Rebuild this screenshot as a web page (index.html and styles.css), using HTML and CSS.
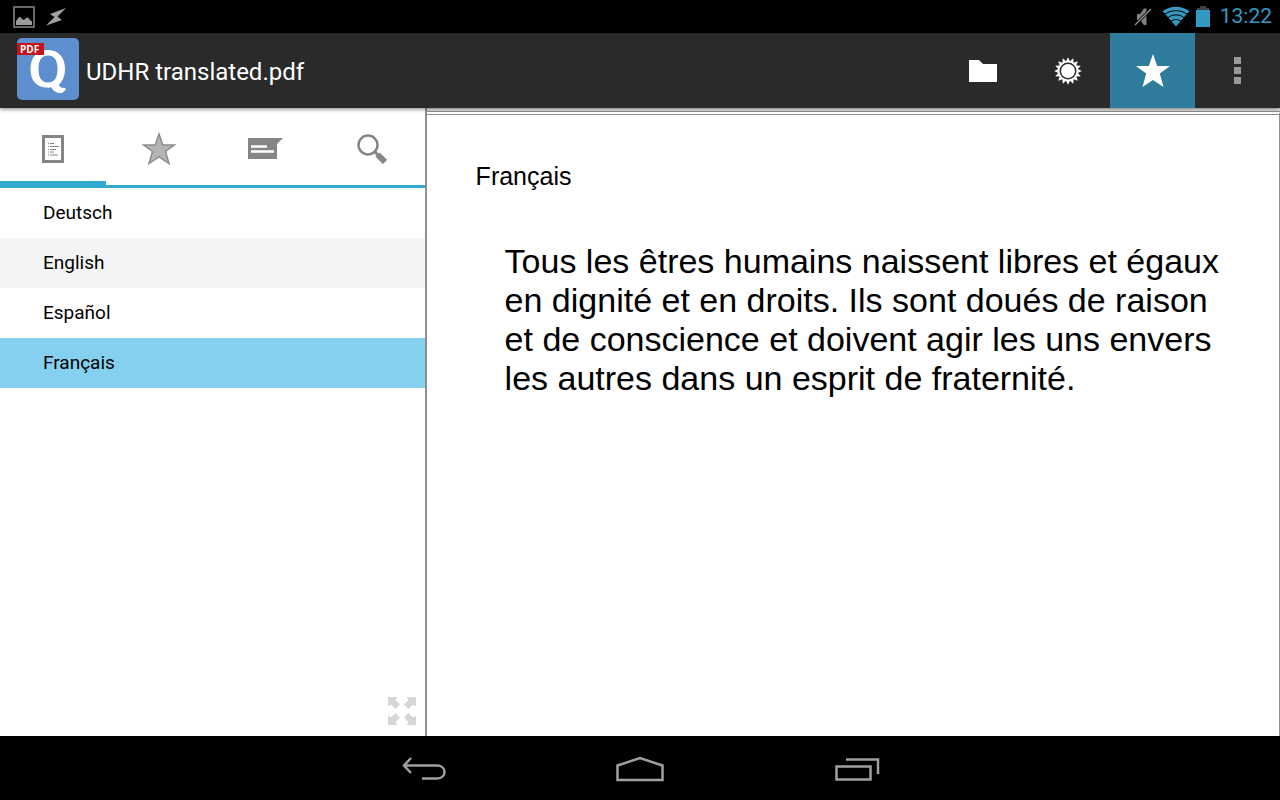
FILE: index.html
```html
<!DOCTYPE html>
<html lang="en">
  <head>
    <meta charset="UTF-8" />
    <meta name="viewport" content="width=device-width, initial-scale=1.0" />
    <title>UDHR translated.pdf</title>
    <link rel="stylesheet" href="styles.css">
  </head>
  <body>
    <div class="status-bar">
      <div class="status-icons">
        <svg width="22" height="22" viewBox="0 0 22 22">
          <rect x="1" y="1" width="20" height="20" fill="none" stroke="#8a8a8a" stroke-width="1.5" />
          <path d="M3 19V15L5 12.500L7 10.500L9 13L11 14L13 12L15 11.500L17 14L19 15.500V19Z" fill="#9c9c9c" />
        </svg>
        <svg width="22" height="20" viewBox="0 0 22 20">
          <path d="M21 1L5 7L9.500 10L1 18.500L17 13L12.500 9.500Z" fill="#a0a0a0" />
        </svg>
      </div>
      <div class="status-icons">
        <svg width="18" height="20" viewBox="0 0 18 20">
          <path d="M3 7H6L10 1.500H12.500V18H10L6 13H3Z" fill="#808080" />
          <path d="M1 18L17 2" stroke="#000" stroke-width="3" />
          <path d="M1 18L17 2" stroke="#8a8a8a" stroke-width="1.500" />
        </svg>
        <svg class="wifi" width="28" height="21" viewBox="0 0 28 21">
          <path d="M14 20.500L0.500 5Q14 -3.500 27.500 5Z" fill="#3399c2" />
          <path d="M2 8.500Q14 0.500 26 8.500M5 12Q14 5.500 23 12M8.500 15.500Q14 11.500 19.500 15.500" fill="none" stroke="#000" stroke-width="1" />
        </svg>
        <svg width="14" height="22" viewBox="0 0 14 22">
          <path d="M4 0H10V2H13V5H1V2H4Z" fill="#3c4144" />
          <rect x="0" y="4" width="14" height="17" fill="#3399c2" />
        </svg>
        <span class="clock">13:22</span>
      </div>
    </div>

    <header class="action-bar">
      <svg class="logo" width="62" height="62" viewBox="0 0 62 62">
        <rect width="62" height="62" rx="5" fill="#5d8fcf" />
        <path fill="#fff" fill-rule="evenodd" d="M31 12C43 12 48 21 48 31C48 38 45.500 43.500 42 46.500C42.500 49 44 50 48.500 50V52L45 55C39 55 36 53 34.500 49.500C19 51 13.500 42 13.500 31C13.500 20 19 12 31 12ZM31 17.500C24 17.500 21.500 23 21.500 31C21.500 39 24 44.500 31 44.500C38 44.500 40.500 39 40.500 31C40.500 23 38 17.500 31 17.500Z" />
        <rect y="5" width="27" height="12" fill="#c6121b" />
        <text class="logo-tag" x="3" y="15">PDF</text>
      </svg>
      <h1>UDHR translated.pdf</h1>
      <button class="action" aria-label="Open">
        <svg width="28" height="22" viewBox="0 0 28 22">
          <path d="M0 0H10L14 4H28V22H0Z" fill="#fff" />
        </svg>
      </button>
      <button class="action" aria-label="Settings">
        <svg width="28" height="28" viewBox="-14 -14 28 28">
          <path id="gear" fill="#fff" />
          <circle r="8.500" fill="#2a2a2a" />
          <circle r="7" fill="#fff" />
        </svg>
      </button>
      <button class="action active" aria-label="Bookmarks">
        <svg width="36" height="36" viewBox="0 0 36 36">
          <path d="M18 1L22.200 13H35L24.800 20.500L28.500 34L18 27L7.500 34L11.200 20.500L1 13H13.800Z" fill="#fff" />
        </svg>
      </button>
      <button class="action" aria-label="More">
        <svg width="7" height="27" viewBox="0 0 7 27">
          <path d="M0 0H7V7H0ZM0 10H7V17H0ZM0 20H7V27H0Z" fill="#9a9a9a" />
        </svg>
      </button>
    </header>

    <main>
      <aside>
        <nav class="tabs">
          <button class="tab selected" aria-label="Outline">
            <svg width="22" height="28" viewBox="0 0 22 28">
              <rect x="1.500" y="1.500" width="19" height="25" fill="#fff" stroke="#858585" stroke-width="3" />
              <path d="M6 8.500H7M8 8.500H12M6 11.500H7M8 11.500H17M6 14.500H7M8 14.500H14M6 17H7M8 17H12M6 20H7M8 20H16" stroke="#858585" />
            </svg>
          </button>
          <button class="tab" aria-label="Bookmarks">
            <svg width="34" height="34" viewBox="0 0 34 34">
              <path d="M17 2L20.800 13H32.500L23.500 19.500L27 31.500L17 24.800L7 31.500L10.500 19.500L1.500 13H13.200Z" fill="#b5b5b5" stroke="#8c8c8c" stroke-width="1.500" />
            </svg>
          </button>
          <button class="tab" aria-label="Annotations">
            <svg width="35" height="21" viewBox="0 0 35 21">
              <path d="M0 0H35L29 6V21H0Z" fill="#858585" />
              <path d="M3 8.500H19M3 13.500H26" stroke="#fff" stroke-width="2.500" />
            </svg>
          </button>
          <button class="tab" aria-label="Search">
            <svg width="30" height="30" viewBox="0 0 30 30">
              <circle cx="11" cy="11" r="9.500" fill="none" stroke="#858585" stroke-width="2.500" />
              <path d="M17.500 17.500L22 22" stroke="#858585" stroke-width="3" />
              <path d="M20.500 20.500L28 28" stroke="#858585" stroke-width="6" />
            </svg>
          </button>
        </nav>
        <ul class="outline">
          <li><a href="#deutsch">Deutsch</a></li>
          <li><a href="#english">English</a></li>
          <li><a href="#espanol">Español</a></li>
          <li><a class="current" href="#francais">Français</a></li>
        </ul>
        <button class="expand" aria-label="Full screen">
          <svg width="30" height="30" viewBox="0 0 30 30">
            <path d="M1 1H10.500L8.500 4L13 8.500L8.500 13L4 8.500L1 10.500ZM29 1H19.500L21.500 4L17 8.500L21.500 13L26 8.500L29 10.500ZM1 29H10.500L8.500 26L13 21.500L8.500 17L4 21.500L1 19.500ZM29 29H19.500L21.500 26L17 21.500L21.500 17L26 21.500L29 19.500Z" fill="#d6d6d6" />
          </svg>
        </button>
      </aside>

      <section class="viewer">
        <article class="page" id="francais" lang="fr">
          <h2>Français</h2>
          <p>
            Tous les êtres humains naissent libres et égaux<br>
            en dignité et en droits. Ils sont doués de raison<br>
            et de conscience et doivent agir les uns envers<br>
            les autres dans un esprit de fraternité.
          </p>
        </article>
      </section>
    </main>

    <footer class="nav-bar">
      <button aria-label="Back">
        <svg width="44" height="24" viewBox="0 0 44 24">
          <path d="M9 1L2 8.500L9 16M2 8.500H35C45 8.500 45 21.500 35 21.500H20" fill="none" stroke="#a0a0a0" stroke-width="2.500" />
        </svg>
      </button>
      <button aria-label="Home">
        <svg width="48" height="26" viewBox="0 0 48 26">
          <path d="M1.500 24V9.500L24 2L46.500 9.500V24Z" fill="none" stroke="#a0a0a0" stroke-width="2.500" />
        </svg>
      </button>
      <button aria-label="Recent apps">
        <svg width="46" height="24" viewBox="0 0 46 24">
          <path d="M2.500 9.500H36.500V22.500H2.500ZM12 2.500H44V17" fill="none" stroke="#a0a0a0" stroke-width="2.500" />
        </svg>
      </button>
    </footer>

    <script>
      // 16 teeth around the settings disc
      let points = [];
      for (let i = 0; i < 32; i++) {
        let r = i % 2 ? 10 : 13.8;
        let a = (i * Math.PI) / 16;
        points.push(`${(r * Math.sin(a)).toFixed(2)} ${(-r * Math.cos(a)).toFixed(2)}`);
      }
      document.getElementById("gear").setAttribute("d", `M${points.join("L")}Z`);
    </script>
  </body>
</html>
```
FILE: styles.css
```css
:root {
  --holo: #33a8d0;
  --bar: #2a2a2a;
  --grey: #8f8f8f;
}

* {
  box-sizing: border-box;
}

body {
  margin: 0;
  min-height: 100vh;
  display: flex;
  flex-direction: column;
  background: #fff;
  font-family: Roboto, sans-serif;
  color: #000;
}

button {
  display: flex;
  align-items: center;
  justify-content: center;
  padding: 0;
  border: none;
  background: none;
  cursor: pointer;
}

svg {
  display: block;
}

.status-bar {
  display: flex;
  justify-content: space-between;
  height: 33px;
  padding: 0 8px 0 13px;
  background: #000;
}

.status-icons {
  display: flex;
  align-items: center;
  gap: 10px;
}

.wifi {
  margin-right: -4px;
}

.clock {
  color: #3399c2;
  font-size: 21px;
  line-height: 35px;
}

.action-bar {
  position: relative;
  display: flex;
  align-items: center;
  height: 75px;
  padding-left: 17px;
  background: var(--bar);
  box-shadow: 0 1px 4px rgba(0, 0, 0, 0.5);
}

.action-bar h1 {
  flex: 1;
  margin: 0 0 0 7px;
  padding-top: 2px;
  color: #fff;
  font-size: 24px;
  font-weight: 400;
}

.logo {
  margin-bottom: 4px;
}

.logo-tag {
  fill: #fff;
  font-family: "Open Sans", sans-serif;
  font-size: 10px;
  font-weight: 700;
}

.action {
  width: 85px;
  align-self: stretch;
}

.action.active {
  background: #307c9c;
}

main {
  flex: 1;
  display: flex;
}

aside {
  width: 33.33%;
  display: flex;
  flex-direction: column;
  border-right: 2px solid var(--grey);
}

.tabs {
  display: flex;
  height: 80px;
  border-bottom: 3px solid var(--holo);
}

.tab {
  flex: 1;
  padding-top: 4px;
}

.tab.selected {
  border-bottom: 4px solid var(--holo);
  padding-top: 8px;
}

.outline {
  flex: 1;
  margin: 0;
  padding: 0;
  list-style: none;
}

.outline a {
  display: block;
  padding-left: 43px;
  color: #000;
  font-size: 19px;
  line-height: 50px;
  text-decoration: none;
}

.outline li:nth-child(even) {
  background: #f4f4f4;
}

.outline .current {
  background: #85d0ee;
}

.expand {
  align-self: flex-end;
  margin: 0 8px 10px;
}

.viewer {
  flex: 1;
  display: flex;
  padding-top: 3px;
  background: #e4e4e4;
}

.page {
  flex: 1;
  padding: 46px 49px;
  border-top: 4px double var(--grey);
  border-right: 1px solid var(--grey);
  background: #fff;
  font-family: "Liberation Sans", Arial, sans-serif;
}

.page h2 {
  margin: 0 0 51px;
  font-size: 25px;
  font-weight: 400;
  line-height: 30px;
}

.page p {
  margin: 0 0 0 29px;
  font-size: 34px;
  line-height: 39px;
  white-space: nowrap;
}

.nav-bar {
  display: flex;
  justify-content: center;
  gap: 170px;
  height: 64px;
  padding: 2px 0 0 2px;
  background: #000;
}
```
